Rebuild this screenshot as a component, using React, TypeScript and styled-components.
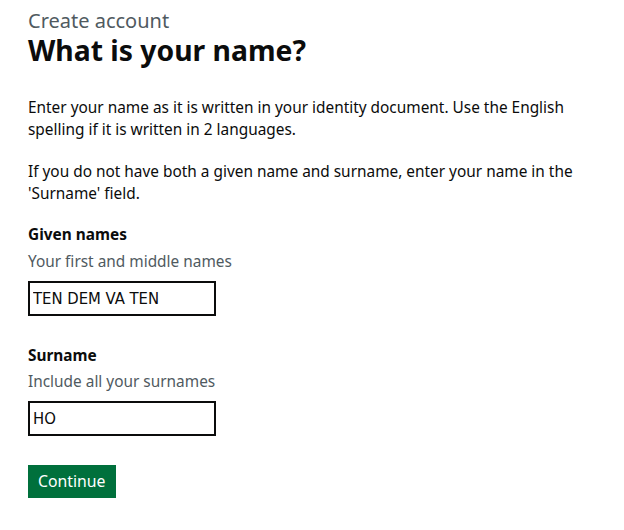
import React from 'react';
import styled, { createGlobalStyle } from 'styled-components';

const GlobalStyle = createGlobalStyle`
    html, body {
        margin: 0;
        padding: 0;
        background: #ffffff;
    }

    body {
        font-family: 'Noto Sans', 'Liberation Sans', sans-serif;
        color: #0b0c0c;
    }
`;

interface FieldProps {
    id: string;
    label: string;
    hint: string;
    value: string;
}

function TextField(props: FieldProps): React.ReactElement {
    return (
        <FormGroup>
            <Label htmlFor={props.id}>{props.label}</Label>
            <Hint>{props.hint}</Hint>
            <Input id={props.id} type="text" defaultValue={props.value} />
        </FormGroup>
    );
}

export default function App(): React.ReactElement {
    return (
        <>
            <GlobalStyle />
            <Page>
                <Caption>Create account</Caption>
                <Heading>What is your name?</Heading>

                <Body>
                    Enter your name as it is written in your identity
                    document. Use the English spelling if it is written in 2
                    languages.
                </Body>
                <Body>
                    If you do not have both a given name and surname, enter
                    your name in the 'Surname' field.
                </Body>

                <TextField
                    id="given-names"
                    label="Given names"
                    hint="Your first and middle names"
                    value="TEN DEM VA TEN"
                />
                <TextField
                    id="surname"
                    label="Surname"
                    hint="Include all your surnames"
                    value="HO"
                />

                <Button type="button">Continue</Button>
            </Page>
        </>
    );
}

const Page = styled.main`
    width: 560px;
    padding: 9px 0 0 28px;
    display: flex;
    flex-direction: column;
    align-items: flex-start;
`;

const Caption = styled.span`
    font-size: 20px;
    line-height: 23px;
    color: #505a5f;
`;

const Heading = styled.h1`
    margin: 1px 0 30px;
    font-size: 28.3px;
    line-height: 34px;
    font-weight: 700;
`;

const Body = styled.p`
    margin: 0 0 19.5px;
    font-size: 15.4px;
    line-height: 22px;
`;

const FormGroup = styled.div`
    display: flex;
    flex-direction: column;
    align-items: flex-start;
    margin-bottom: 29px;
`;

const Label = styled.label`
    font-size: 15.4px;
    line-height: 22px;
    font-weight: 700;
    margin-bottom: 4.5px;
`;

const Hint = styled.div`
    font-size: 15.4px;
    line-height: 22px;
    color: #505a5f;
    margin-bottom: 8px;
`;

const Input = styled.input`
    box-sizing: border-box;
    width: 188px;
    height: 35px;
    margin: 0;
    padding: 0 3px;
    border: 2px solid #0b0c0c;
    border-radius: 0;
    font-family: 'DejaVu Sans Condensed', Roboto, sans-serif;
    font-size: 16.5px;
    color: #0b0c0c;
    background: #ffffff;
    outline: none;
`;

const Button = styled.button`
    margin: 0;
    padding: 5px 10px 6px;
    border: 0;
    border-radius: 0;
    background: #00703c;
    box-shadow: 0 2px 0 #002d18;
    color: #ffffff;
    font-family: 'Noto Sans', 'Liberation Sans', sans-serif;
    font-size: 15.8px;
    line-height: 22px;
    cursor: pointer;
`;
